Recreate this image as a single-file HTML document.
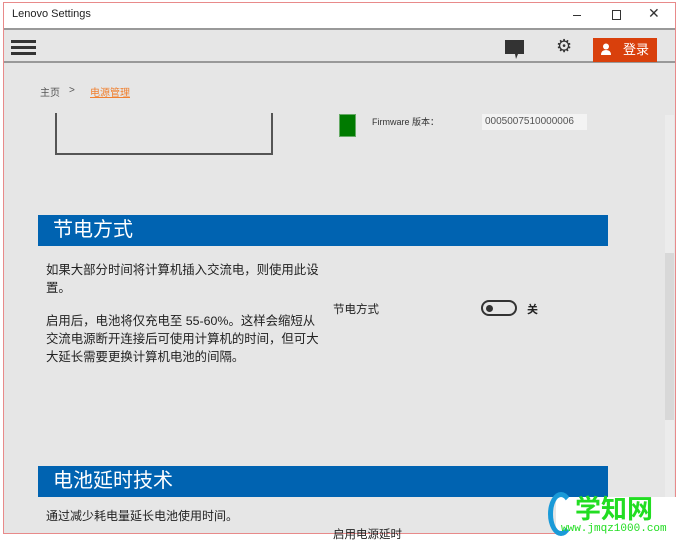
<!DOCTYPE html>
<html><head><meta charset="utf-8"><style>
*{margin:0;padding:0;box-sizing:border-box}
body{width:680px;height:537px;overflow:hidden;background:#fff;font-family:"Liberation Sans","Noto Sans CJK SC",sans-serif;position:relative;color:#222}
.a{position:absolute}
</style></head><body>
<div class="a" style="left:3px;top:2px;width:673px;height:532px;border:1px solid #e88a8a;background:#e6e6e6"></div>
<div class="a" style="left:4px;top:3px;width:671px;height:26px;background:#fff"></div>
<div class="a" style="left:12px;top:8px;font-size:11px;color:#222">Lenovo Settings</div>
<div class="a" style="left:573px;top:15px;width:8px;height:1px;background:#333"></div>
<div class="a" style="left:612px;top:10px;width:9px;height:10px;border:1px solid #333"></div>
<div class="a" style="left:648px;top:5px;font-size:14px;color:#333">✕</div>
<div class="a" style="left:4px;top:28px;width:671px;height:2px;background:#999"></div>
<div class="a" style="left:4px;top:61px;width:671px;height:2px;background:#999"></div>
<div class="a" style="left:11px;top:40px;width:25px;height:3px;background:#333;box-shadow:0 6px 0 #333,0 12px 0 #333"></div>
<svg class="a" style="left:505px;top:40px" width="20" height="20"><path d="M0 0H19V14H13L11 19L10 14H0Z" fill="#333"/></svg>
<div class="a" style="left:556px;top:36px;font-size:18px;color:#333">⚙</div>
<div class="a" style="left:593px;top:38px;width:64px;height:24px;background:#d9400c;color:#fff;font-size:13px;padding-left:30px;line-height:24px">登录</div>
<svg class="a" style="left:600px;top:43px" width="12" height="13"><circle cx="6" cy="3.5" r="3" fill="#fff"/><path d="M1 12Q1 7 6 7Q11 7 11 12Z" fill="#fff"/></svg>
<div class="a" style="left:40px;top:84px;font-size:10px;color:#555">主页</div>
<div class="a" style="left:69px;top:85px;font-size:10px;color:#555">&gt;</div>
<div class="a" style="left:90px;top:84px;font-size:10px;color:#f08030;text-decoration:underline">电源管理</div>
<div class="a" style="left:55px;top:113px;width:218px;height:42px;border:2px solid #555;border-top:none"></div>
<div class="a" style="left:339px;top:114px;width:17px;height:23px;background:#007a00;border:1px solid #6a6"></div>
<div class="a" style="left:372px;top:115px;font-size:9px;color:#333">Firmware 版本：</div>
<div class="a" style="left:482px;top:114px;width:105px;height:16px;background:#f3f3f3;font-size:10px;color:#555;padding-left:3px;line-height:16px">0005007510000006</div>
<div class="a" style="left:665px;top:115px;width:9px;height:418px;background:#ececec"></div>
<div class="a" style="left:665px;top:253px;width:9px;height:167px;background:#d8d8d8"></div>
<div class="a" style="left:38px;top:215px;width:570px;height:31px;background:#0063b1;color:#fff;font-size:20px;padding-left:15px;line-height:31px">节电方式</div>
<div class="a" style="left:46px;top:261px;width:290px;font-size:12.4px;line-height:18px;color:#222">如果大部分时间将计算机插入交流电，则使用此设置。</div>
<div class="a" style="left:46px;top:312px;width:290px;font-size:12.4px;line-height:18px;color:#222">启用后，电池将仅充电至 55-60%。这样会缩短从<br>交流电源断开连接后可使用计算机的时间，但可大<br>大延长需要更换计算机电池的间隔。</div>
<div class="a" style="left:333px;top:301px;font-size:11.5px">节电方式</div>
<div class="a" style="left:481px;top:300px;width:36px;height:16px;border:2px solid #333;border-radius:8px"></div>
<div class="a" style="left:486px;top:305px;width:7px;height:7px;background:#333;border-radius:50%"></div>
<div class="a" style="left:527px;top:301px;font-size:11px;font-weight:bold">关</div>
<div class="a" style="left:38px;top:466px;width:570px;height:31px;background:#0063b1;color:#fff;font-size:20px;padding-left:15px;line-height:31px">电池延时技术</div>
<div class="a" style="left:46px;top:507px;font-size:12px">通过减少耗电量延长电池使用时间。</div>
<div class="a" style="left:333px;top:526px;font-size:11.5px">启用电源延时</div>
<div class="a" style="left:556px;top:497px;width:124px;height:40px;background:#fff"></div>
<div class="a" style="left:548px;top:492px;width:26px;height:44px;border-radius:50%;border:5px solid #1a9ad8;border-right-color:transparent"></div>
<div class="a" style="left:575px;top:494px;font-size:26px;font-weight:bold;color:#22dd22;line-height:30px">学知网</div>
<div class="a" style="left:561px;top:523px;font-size:11px;color:#22dd22;font-family:'Liberation Mono',monospace;line-height:13px">www.jmqz1000.com</div>
</body></html>
